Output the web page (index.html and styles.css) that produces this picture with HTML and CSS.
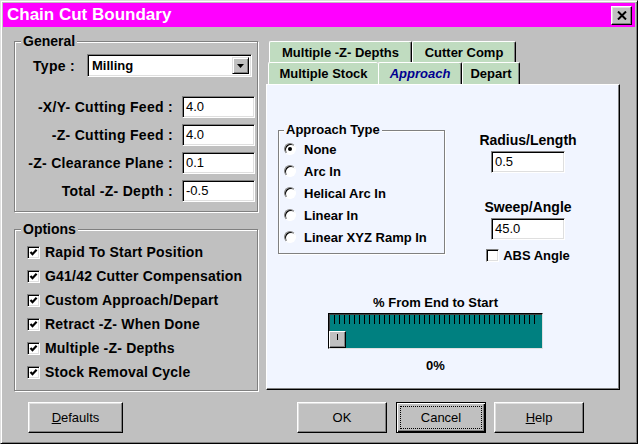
FILE: index.html
```html
<!DOCTYPE html>
<html lang="en">
<head>
    <meta charset="UTF-8">
    <title>Chain Cut Boundary</title>
    <link rel="stylesheet" href="styles.css">
</head>
<body>
    <div class="window">
        <div class="titlebar">
            <span class="title">Chain Cut Boundary</span>
            <button class="close">
                <svg width="10" height="9" viewBox="0 0 10 9"><path d="M1 0.5 L9 8.5 M9 0.5 L1 8.5" stroke="#000" stroke-width="2"/></svg>
            </button>
        </div>

        <div class="main">
            <div class="left">
                <fieldset class="group general">
                    <legend>General</legend>
                    <div class="type-row">
                        <label>Type :</label>
                        <div class="select">
                            <span class="select-text">Milling</span>
                            <span class="drop">
                                <svg width="7" height="4" viewBox="0 0 7 4"><path d="M0 0 H7 L3.5 4 Z" fill="#000"/></svg>
                            </span>
                        </div>
                    </div>
                    <div class="fields">
                        <div class="field-row"><label>-X/Y- Cutting Feed :</label><div class="edit">4.0</div></div>
                        <div class="field-row"><label>-Z- Cutting Feed :</label><div class="edit">4.0</div></div>
                        <div class="field-row"><label>-Z- Clearance Plane :</label><div class="edit">0.1</div></div>
                        <div class="field-row"><label>Total -Z- Depth :</label><div class="edit">-0.5</div></div>
                    </div>
                </fieldset>

                <fieldset class="group options">
                    <legend>Options</legend>
                    <div class="checks">
                        <div class="check"><span class="box on"></span>Rapid To Start Position</div>
                        <div class="check"><span class="box on"></span>G41/42 Cutter Compensation</div>
                        <div class="check"><span class="box on"></span>Custom Approach/Depart</div>
                        <div class="check"><span class="box on"></span>Retract -Z- When Done</div>
                        <div class="check"><span class="box on"></span>Multiple -Z- Depths</div>
                        <div class="check"><span class="box on"></span>Stock Removal Cycle</div>
                    </div>
                </fieldset>
            </div>

            <div class="tabs">
                <div class="tab-row back">
                    <div class="tab w-depths">Multiple -Z- Depths</div>
                    <div class="tab w-comp">Cutter Comp</div>
                </div>
                <div class="tab-row front">
                    <div class="tab w-stock no-edge">Multiple Stock</div>
                    <div class="tab w-approach active">Approach</div>
                    <div class="tab w-depart">Depart</div>
                </div>
                <div class="panel">
                    <div class="panel-top">
                        <fieldset class="group approach">
                            <legend>Approach Type</legend>
                            <div class="radios">
                                <div class="radio"><span class="dot on"></span>None</div>
                                <div class="radio"><span class="dot"></span>Arc In</div>
                                <div class="radio"><span class="dot"></span>Helical Arc In</div>
                                <div class="radio"><span class="dot"></span>Linear In</div>
                                <div class="radio"><span class="dot"></span>Linear XYZ Ramp In</div>
                            </div>
                        </fieldset>
                        <div class="params">
                            <div class="param-label">Radius/Length</div>
                            <div class="edit small">0.5</div>
                            <div class="param-label second">Sweep/Angle</div>
                            <div class="edit small">45.0</div>
                            <div class="abs"><span class="box"></span>ABS Angle</div>
                        </div>
                    </div>

                    <div class="slider-block">
                        <div class="slider-label">% From End to Start</div>
                        <div class="slider">
                            <div class="ticks"></div>
                            <div class="thumb"></div>
                        </div>
                        <div class="slider-value">0%</div>
                    </div>
                </div>
            </div>
        </div>

        <div class="buttons">
            <button class="btn defaults"><u>D</u>efaults</button>
            <button class="btn ok">OK</button>
            <button class="btn cancel"><span>Cancel</span></button>
            <button class="btn"><u>H</u>elp</button>
        </div>
    </div>
</body>
</html>
```

FILE: styles.css
```css
body {
    margin: 0;
    background-color: #c0c0c0;
    font-family: "Liberation Sans", Arial, sans-serif;
    color: #000;
}

.window {
    width: 638px;
    height: 444px;
    box-sizing: border-box;
    padding: 2px;
    background-color: #c0c0c0;
    border: 1px solid;
    border-color: #dfdfdf #000 #000 #dfdfdf;
    box-shadow: inset 1px 1px #fff, inset -1px -1px #808080;
    display: flex;
    flex-direction: column;
}

.titlebar {
    height: 24px;
    background-color: #ff00ff;
    display: flex;
    align-items: center;
    justify-content: space-between;
    padding: 0 3px 0 4px;
}

.title {
    color: #fff;
    font-weight: bold;
    font-size: 17px;
}

.close {
    width: 21px;
    height: 19px;
    padding: 0;
    background-color: #c0c0c0;
    border: 1px solid;
    border-color: #fff #000 #000 #fff;
    box-shadow: inset -1px -1px #808080, inset 1px 1px #dfdfdf;
    display: flex;
    align-items: center;
    justify-content: center;
}

/* main area */
.main {
    display: grid;
    grid-template-columns: 244px 354px;
    column-gap: 8px;
    padding-left: 11px;
}

.left {
    display: flex;
    flex-direction: column;
}

.group {
    margin: 0;
    padding: 0;
    min-width: 0;
    box-sizing: border-box;
    border: 1px solid #808080;
    box-shadow: 1px 1px 0 #fff, inset 1px 1px 0 #fff;
}

.group legend {
    font-size: 14px;
    font-weight: bold;
    line-height: 14px;
    padding: 0 2px;
    margin-left: 6px;
    background-color: #c0c0c0;
}

.general {
    height: 178px;
    margin-top: 7px;
}

.options {
    height: 169px;
    margin-top: 10px;
}

.type-row {
    display: flex;
    align-items: center;
    margin-top: 6px;
    padding-left: 18px;
}

.type-row label,
.field-row label {
    font-size: 14px;
    font-weight: bold;
    letter-spacing: 0.3px;
}

.type-row label {
    width: 54px;
}

.select {
    width: 165px;
    height: 23px;
    box-sizing: border-box;
    background-color: #fff;
    border: 1px solid;
    border-color: #808080 #fff #fff #808080;
    box-shadow: inset 1px 1px #000, inset -1px -1px #dfdfdf;
    display: flex;
    align-items: center;
    justify-content: space-between;
    padding: 2px 2px 2px 4px;
}

.select-text {
    font-size: 13px;
    font-weight: bold;
}

.drop {
    width: 17px;
    height: 17px;
    box-sizing: border-box;
    background-color: #c0c0c0;
    border: 1px solid;
    border-color: #dfdfdf #000 #000 #dfdfdf;
    box-shadow: inset 1px 1px #fff, inset -1px -1px #808080;
    display: flex;
    align-items: center;
    justify-content: center;
}

.fields {
    display: flex;
    flex-direction: column;
    gap: 6px;
    margin-top: 19px;
}

.field-row {
    display: flex;
    align-items: center;
    justify-content: flex-end;
    gap: 9px;
    padding-right: 2px;
}

.edit {
    width: 73px;
    height: 22px;
    box-sizing: border-box;
    background-color: #fff;
    border: 1px solid;
    border-color: #808080 #fff #fff #808080;
    box-shadow: inset 1px 1px #000, inset -1px -1px #dfdfdf;
    font-size: 13px;
    line-height: 20px;
    padding-left: 3px;
}

.edit.small {
    width: 74px;
}

/* checkboxes */
.checks {
    margin-top: 4px;
    padding-left: 12px;
}

.check {
    height: 24px;
    display: flex;
    align-items: center;
    gap: 5px;
    font-size: 14px;
    font-weight: bold;
    letter-spacing: 0.2px;
}

.box {
    width: 13px;
    height: 13px;
    box-sizing: border-box;
    background-color: #fff;
    border: 1px solid;
    border-color: #808080 #fff #fff #808080;
    box-shadow: inset 1px 1px #000, inset -1px -1px #dfdfdf;
    flex: none;
}

.box.on {
    background-image: url("data:image/svg+xml;utf8,<svg xmlns='http://www.w3.org/2000/svg' width='11' height='11' viewBox='0 0 11 11'><path d='M2.5 5 L4.5 7.2 L8.6 2.8' stroke='black' stroke-width='2.2' fill='none'/></svg>");
    background-repeat: no-repeat;
}

/* tabs */
.tabs {
    margin-top: 14px;
    display: flex;
    flex-direction: column;
}

.tab-row {
    display: flex;
}

.tab-row.back {
    height: 21px;
    margin-left: 3px;
}

.tab-row.front {
    height: 22px;
    margin-left: 2px;
}

.tab {
    box-sizing: border-box;
    background-color: #c0dcc0;
    border-top: 1px solid #fff;
    border-left: 1px solid #fff;
    border-right: 1px solid #000;
    box-shadow: inset -1px 0 #808080;
    border-radius: 2px 2px 0 0;
    font-size: 13px;
    font-weight: bold;
    display: flex;
    align-items: center;
    justify-content: center;
}

.tab.no-edge {
    border-right: none;
    box-shadow: none;
}

.tab.active {
    color: #000090;
    font-style: italic;
}

.w-depths { width: 143px; }
.w-comp { width: 104px; }
.w-stock { width: 110px; }
.w-approach { width: 84px; }
.w-depart { width: 58px; }

.panel {
    height: 306px;
    box-sizing: border-box;
    background-color: #f1f5ff;
    border: 1px solid;
    border-color: #fff #000 #000 #fff;
    box-shadow: inset -1px -1px #808080;
}

.panel-top {
    display: flex;
    margin-top: 38px;
}

.approach {
    width: 167px;
    height: 131px;
    margin-left: 11px;
}

.approach legend {
    font-size: 13px;
    background-color: #f1f5ff;
    margin-left: 5px;
}

.radios {
    margin-top: 1px;
    padding-left: 5px;
}

.radio {
    height: 22px;
    display: flex;
    align-items: center;
    gap: 8px;
    font-size: 13px;
    font-weight: bold;
}

.dot {
    width: 12px;
    height: 12px;
    box-sizing: border-box;
    border-radius: 50%;
    background-color: #fff;
    border: 1px solid;
    border-color: #808080 #fff #fff #808080;
    box-shadow: inset 1px 1px #000;
    display: flex;
    align-items: center;
    justify-content: center;
    flex: none;
}

.dot.on::after {
    content: "";
    width: 4px;
    height: 4px;
    border-radius: 50%;
    background-color: #000;
}

.params {
    width: 152px;
    margin-left: 7px;
    padding-top: 9px;
    display: flex;
    flex-direction: column;
    align-items: center;
}

.param-label {
    font-size: 14px;
    font-weight: bold;
    line-height: 16px;
    margin-bottom: 3px;
}

.param-label.second {
    margin-top: 26px;
}

.abs {
    margin-top: 8px;
    display: flex;
    align-items: center;
    gap: 4px;
    font-size: 13px;
    font-weight: bold;
}

/* slider */
.slider-block {
    width: 215px;
    margin-top: 32px;
    margin-left: 61px;
    text-align: center;
    font-size: 13px;
    font-weight: bold;
}

.slider-label {
    line-height: 16px;
}

.slider {
    height: 36px;
    margin-top: 2px;
    box-sizing: border-box;
    background-color: #008080;
    border: 1px solid;
    border-color: #000 #dfdfdf #dfdfdf #000;
    box-shadow: inset 1px 1px #404040;
    text-align: left;
}

.ticks {
    height: 9px;
    margin: 1px 4px 0 5px;
    background-image: repeating-linear-gradient(90deg, #000 0 1px, transparent 1px 5px);
}

.thumb {
    width: 17px;
    height: 17px;
    margin-top: 7px;
    box-sizing: border-box;
    background-color: #c0c0c0;
    border: 1px solid;
    border-color: #fff #000 #000 #fff;
    box-shadow: inset -1px -1px #808080;
    background-image: linear-gradient(#000, #000);
    background-size: 1px 6px;
    background-position: 7px 2px;
    background-repeat: no-repeat;
}

.slider-value {
    margin-top: 9px;
    line-height: 16px;
}

/* bottom buttons */
.buttons {
    display: flex;
    margin-top: 11px;
    padding-left: 25px;
    padding-right: 51px;
}

.btn {
    width: 90px;
    height: 31px;
    padding: 0;
    font-family: "Liberation Sans", Arial, sans-serif;
    font-size: 13px;
    color: #000;
    background-color: #c0c0c0;
    border: 1px solid;
    border-color: #fff #000 #000 #fff;
    box-shadow: inset -1px -1px #808080, inset 1px 1px #dfdfdf;
}

.btn.defaults {
    width: 95px;
}

.btn.ok {
    margin-left: auto;
    margin-right: 9px;
}

.btn.cancel {
    margin-right: 8px;
    border: 1px solid #000;
    box-shadow: inset 1px 1px #fff, inset -1px -1px #000, inset -2px -2px #808080;
    outline: 1px dotted #000;
    outline-offset: -5px;
}
```
